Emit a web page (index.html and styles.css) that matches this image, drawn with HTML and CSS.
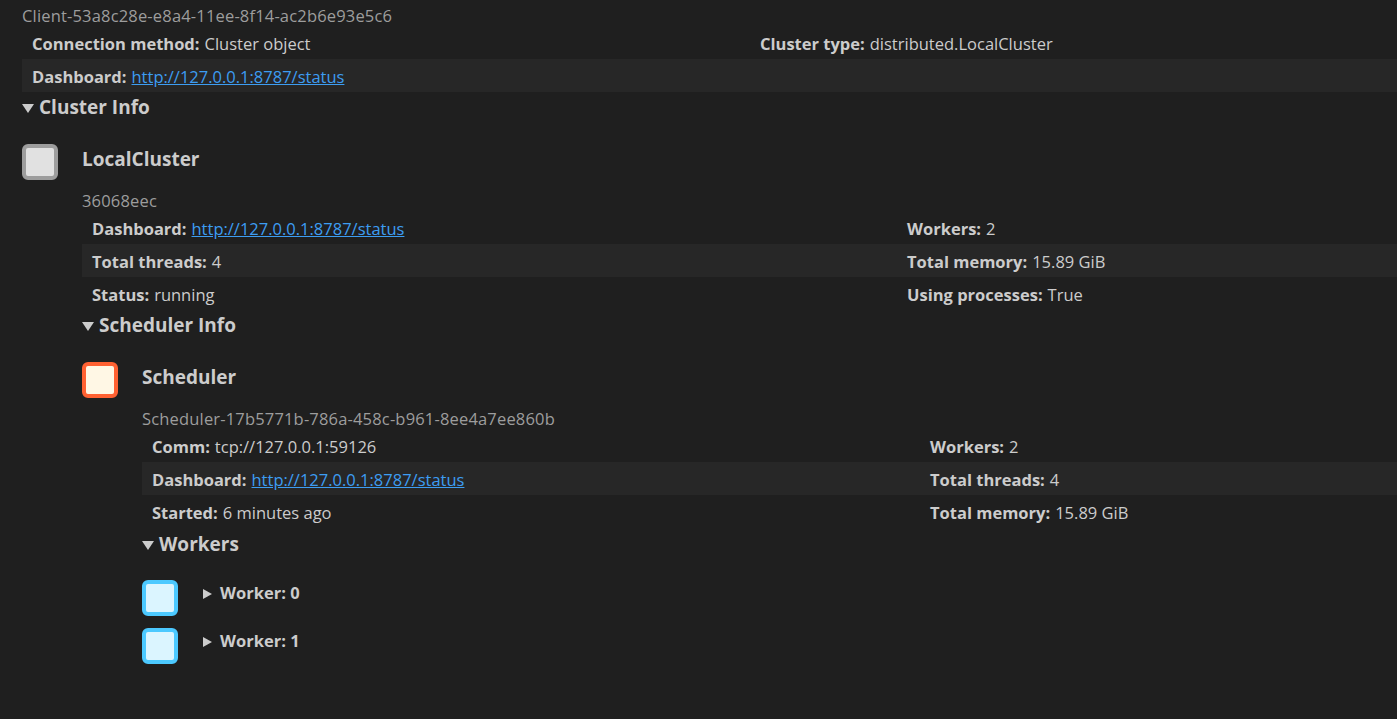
FILE: index.html
```html
<!DOCTYPE html>
<html lang="en">
<head>
<meta charset="utf-8">
<title>Dask Client</title>
<link rel="stylesheet" href="styles.css">
</head>
<body>
<div class="client">
  <p class="ident first">Client-53a8c28e-e8a4-11ee-8f14-ac2b6e93e5c6</p>
  <div class="kv kv-client">
    <div class="cell"><b>Connection method:</b> Cluster object</div>
    <div class="cell"><b>Cluster type:</b> distributed.LocalCluster</div>
    <div class="cell stripe"><b>Dashboard:</b> <a href="#">http://127.0.0.1:8787/status</a></div>
    <div class="cell stripe"></div>
  </div>

  <details class="section" open>
    <summary class="sec-title"><span class="tri-down"></span><h3>Cluster Info</h3></summary>
    <div class="entity">
      <div class="icon icon-cluster"></div>
      <div class="entity-body">
        <h3 class="name">LocalCluster</h3>
        <p class="ident">36068eec</p>
        <div class="kv kv-cluster">
          <div class="cell"><b>Dashboard:</b> <a href="#">http://127.0.0.1:8787/status</a></div>
          <div class="cell"><b>Workers:</b> 2</div>
          <div class="cell stripe"><b>Total threads:</b> 4</div>
          <div class="cell stripe"><b>Total memory:</b> 15.89 GiB</div>
          <div class="cell"><b>Status:</b> running</div>
          <div class="cell"><b>Using processes:</b> True</div>
        </div>

        <details class="section" open>
          <summary class="sec-title"><span class="tri-down"></span><h3>Scheduler Info</h3></summary>
          <div class="entity">
            <div class="icon icon-scheduler"></div>
            <div class="entity-body">
              <h3 class="name">Scheduler</h3>
              <p class="ident">Scheduler-17b5771b-786a-458c-b961-8ee4a7ee860b</p>
              <div class="kv kv-scheduler">
                <div class="cell"><b>Comm:</b> tcp://127.0.0.1:59126</div>
                <div class="cell"><b>Workers:</b> 2</div>
                <div class="cell stripe"><b>Dashboard:</b> <a href="#">http://127.0.0.1:8787/status</a></div>
                <div class="cell stripe"><b>Total threads:</b> 4</div>
                <div class="cell"><b>Started:</b> 6 minutes ago</div>
                <div class="cell"><b>Total memory:</b> 15.89 GiB</div>
              </div>

              <details class="section section-workers" open>
                <summary class="sec-title"><span class="tri-down"></span><h3>Workers</h3></summary>
                <div class="workers">
                  <div class="worker">
                    <div class="icon icon-worker"></div>
                    <details class="worker-body">
                      <summary class="worker-title"><span class="tri-right"></span><h4>Worker: 0</h4></summary>
                    </details>
                  </div>
                  <div class="worker">
                    <div class="icon icon-worker"></div>
                    <details class="worker-body">
                      <summary class="worker-title"><span class="tri-right"></span><h4>Worker: 1</h4></summary>
                    </details>
                  </div>
                </div>
              </details>
            </div>
          </div>
        </details>
      </div>
    </div>
  </details>
</div>
</body>
</html>
```

FILE: styles.css
```css
html, body {
  margin: 0;
  padding: 0;
  background: #1f1f1f;
}
body {
  font-family: "Open Sans", "Noto Sans", sans-serif;
  font-size: 16.5px;
  color: #cccccc;
}
b { font-weight: 700; }
a { color: #3d9df2; text-decoration: underline; }

.client {
  padding-left: 22px;
}
.ident {
  margin: 0;
  color: #9d9d9d;
  line-height: 22px;
  letter-spacing: 0.17px;
}
.ident.first {
  padding-top: 5px;
}

.kv {
  display: grid;
  grid-auto-rows: 33px;
}
.ident.first + .kv { margin-top: -1px; }
.kv-client { grid-template-columns: 728px 1fr; }
.kv-cluster { grid-template-columns: 815px 1fr; }
.kv-scheduler { grid-template-columns: 778px 1fr; }
.cell {
  display: flex;
  align-items: center;
  padding-left: 10px;
  padding-top: 1px;
  white-space: nowrap;
  gap: 5px;
}
.cell.stripe { background: #272727; }

.section > summary { list-style: none; }
.section > summary::-webkit-details-marker { display: none; }
.sec-title {
  display: flex;
  align-items: center;
  height: 24px;
  margin-top: 3px;
  cursor: pointer;
}
.section-workers > .sec-title { margin-top: 4px; }
.sec-title h3 {
  margin: 0;
  font-size: 19px;
  font-weight: 700;
  line-height: 24px;
}
.tri-down {
  width: 0;
  height: 0;
  border-left: 6px solid transparent;
  border-right: 6px solid transparent;
  border-top: 9px solid #cccccc;
  margin-right: 5px;
  margin-top: 2px;
}

.entity {
  display: flex;
  margin-top: 25px;
}
.icon {
  flex: none;
  box-sizing: border-box;
  width: 36px;
  height: 36px;
  border-radius: 6px;
  border: 4px solid;
}
.icon-cluster { background: #e1e1e1; border-color: #9d9d9d; }
.icon-scheduler { background: #fff7e5; border-color: #ff6132; }
.icon-worker { background: #dbf5ff; border-color: #4cc9ff; }

.entity-body {
  flex: 1;
  min-width: 0;
  margin-left: 24px;
}
.name {
  margin: 3px 0 0;
  font-size: 19px;
  font-weight: 700;
  line-height: 24px;
}
.entity-body > .ident {
  margin-top: 19px;
}
.entity-body > .ident + .kv { margin-top: -1px; }

.workers {
  display: flex;
  flex-direction: column;
  gap: 12px;
  margin-top: 24px;
}
.worker {
  display: flex;
}
.worker-body {
  margin-left: 24px;
}
.worker-body > summary { list-style: none; }
.worker-body > summary::-webkit-details-marker { display: none; }
.worker-title {
  display: flex;
  align-items: center;
  height: 24px;
  padding-top: 1px;
  cursor: pointer;
}
.worker-title h4 {
  margin: 0;
  font-size: 16.5px;
  font-weight: 700;
  line-height: 24px;
}
.tri-right {
  width: 0;
  height: 0;
  border-top: 5px solid transparent;
  border-bottom: 5px solid transparent;
  border-left: 9px solid #cccccc;
  margin-left: 1px;
  margin-right: 8px;
  margin-top: 1px;
}
```
